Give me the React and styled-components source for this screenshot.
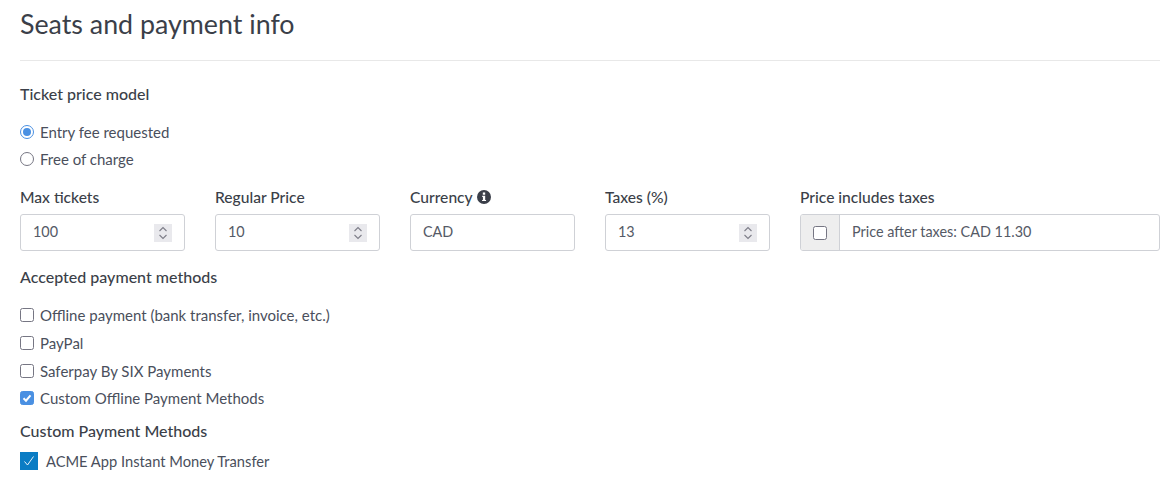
import React from 'react';
import styled, { createGlobalStyle } from 'styled-components';

const GlobalStyle = createGlobalStyle`
  html, body {
    margin: 0;
    background: #fff;
  }
  body {
    font-family: 'Lato', 'Noto Sans', sans-serif;
    font-size: 15px;
    color: #4a4f5c;
  }
`;

const Page = styled.div`
  width: 1174px;
  height: 497px;
  overflow: hidden;
  padding: 0 14px 0 20px;
  box-sizing: border-box;
`;

const Title = styled.h2`
  margin: 0;
  height: 61px;
  padding-top: 6px;
  box-sizing: border-box;
  font-size: 26.8px;
  line-height: 36px;
  font-weight: 400;
  color: #3b3f49;
  border-bottom: 1px solid #e8e8e8;
`;

const SectionLabel = styled.div`
  font-size: 16px;
  font-weight: 500;
  line-height: 20px;
  color: #3b3f49;
  height: 20px;
  margin-top: ${(p) => p.$top || 0}px;
`;

const OptionList = styled.div`
  display: flex;
  flex-direction: column;
  margin-top: ${(p) => p.$top || 0}px;
`;

const Option = styled.label`
  display: flex;
  align-items: center;
  gap: ${(p) => p.$gap || 6}px;
  height: ${(p) => p.$height || 27}px;
  margin-top: ${(p) => p.$top || 0}px;
  font-size: ${(p) => p.$size || 15}px;
  color: #4a4f5c;
`;

const Radio = styled.span`
  width: 14px;
  height: 14px;
  border-radius: 50%;
  box-sizing: border-box;
  border: 1px solid ${(p) => (p.$on ? '#4a90e2' : '#767683')};
  background: #fff;
  display: flex;
  align-items: center;
  justify-content: center;

  &::after {
    content: '';
    display: ${(p) => (p.$on ? 'block' : 'none')};
    width: 8px;
    height: 8px;
    border-radius: 50%;
    background: #4a90e2;
  }
`;

const Check = styled.span`
  width: 14px;
  height: 14px;
  border-radius: 2.5px;
  box-sizing: border-box;
  border: 1px solid ${(p) => (p.$on ? '#4a90e2' : '#767683')};
  background: ${(p) => (p.$on ? '#4a90e2' : '#fff')};
  display: flex;
  align-items: center;
  justify-content: center;
  flex: none;
`;

const BigCheck = styled.span`
  width: 18px;
  height: 18px;
  background: #0a7cc4;
  display: flex;
  align-items: center;
  justify-content: center;
  flex: none;
`;

const FieldRow = styled.div`
  display: flex;
  gap: 30px;
  margin-top: 15px;
`;

const FieldCol = styled.div`
  width: ${(p) => p.$width || 165}px;
`;

const FieldLabel = styled.div`
  height: 20px;
  line-height: 20px;
  margin-bottom: 7px;
  font-size: 15.6px;
  font-weight: 500;
  color: #3b3f49;
  display: flex;
  align-items: center;
  gap: 4px;
`;

const Input = styled.div`
  height: 37px;
  box-sizing: border-box;
  border: 1px solid #cfd1d6;
  border-radius: 3px;
  background: #fff;
  display: flex;
  align-items: center;
  justify-content: space-between;
  padding: 0 12px;
  color: #555a66;
  font-size: 14.4px;
`;

const InputValue = styled.span`
  margin-bottom: 2px;
`;

const Spinner = styled.span`
  width: 18px;
  height: 18px;
  background: #e9e9ed;
  display: flex;
  align-items: center;
  justify-content: center;
`;

const Group = styled.div`
  height: 37px;
  box-sizing: border-box;
  border: 1px solid #cfd1d6;
  border-radius: 3px;
  display: flex;
  overflow: hidden;
`;

const Addon = styled.div`
  width: 38px;
  flex: none;
  background: #eeeeee;
  border-right: 1px solid #cfd1d6;
  display: flex;
  align-items: center;
  justify-content: center;
`;

const GroupText = styled.div`
  flex: 1;
  padding: 0 0 2px 12px;
  display: flex;
  align-items: center;
  color: #555a66;
  font-size: 14.4px;
`;

const SpinIcon = () => (
  <svg width="10" height="14" viewBox="0 0 10 14" fill="none" stroke="#7d7d88" strokeWidth="1.1">
    <path d="M1.5 5 5 1.5 8.5 5" />
    <path d="M1.5 9 5 12.5 8.5 9" />
  </svg>
);

const InfoIcon = () => (
  <svg width="14" height="14" viewBox="0 0 13 13">
    <circle cx="6.5" cy="6.5" r="6.5" fill="#3b3f49" />
    <rect x="5.4" y="2.3" width="2.2" height="2.1" fill="#fff" />
    <path d="M4.8 5.4h2.8v3.9h0.8v1H4.7v-1h0.8V6.4h-0.7z" fill="#fff" />
  </svg>
);

const Tick = () => (
  <svg width="10" height="10" viewBox="0 0 10 10" fill="none" stroke="#fff" strokeWidth="2">
    <path d="M1.5 5.2 4 7.7 8.5 2.3" />
  </svg>
);

const ThinTick = () => (
  <svg width="14" height="14" viewBox="0 0 14 14" fill="none" stroke="#fff" strokeWidth="0.9">
    <path d="M2.5 7.5 5.5 11 11.5 2.500" />
  </svg>
);

const payments = [
  { label: 'Offline payment (bank transfer, invoice, etc.)', height: 28 },
  { label: 'PayPal', height: 28 },
  { label: 'Saferpay By SIX Payments', height: 28 },
  { label: 'Custom Offline Payment Methods', height: 26, on: true },
];

const NumberField = ({ label, value }) => (
  <FieldCol>
    <FieldLabel>{label}</FieldLabel>
    <Input>
      <InputValue>{value}</InputValue>
      <Spinner>
        <SpinIcon />
      </Spinner>
    </Input>
  </FieldCol>
);

const App = () => (
  <Page>
    <GlobalStyle />
    <Title>Seats and payment info</Title>

    <SectionLabel $top={23}>Ticket price model</SectionLabel>
    <OptionList $top={14}>
      <Option>
        <Radio $on />
        Entry fee requested
      </Option>
      <Option>
        <Radio />
        Free of charge
      </Option>
    </OptionList>

    <FieldRow>
      <NumberField label="Max tickets" value="100" />
      <NumberField label="Regular Price" value="10" />
      <FieldCol>
        <FieldLabel>
          Currency
          <InfoIcon />
        </FieldLabel>
        <Input>
          <InputValue>CAD</InputValue>
        </Input>
      </FieldCol>
      <NumberField label="Taxes (%)" value="13" />
      <FieldCol $width={360}>
        <FieldLabel>Price includes taxes</FieldLabel>
        <Group>
          <Addon>
            <Check />
          </Addon>
          <GroupText>Price after taxes: CAD 11.30</GroupText>
        </Group>
      </FieldCol>
    </FieldRow>

    <SectionLabel $top={16}>Accepted payment methods</SectionLabel>
    <OptionList $top={14}>
      {payments.map((item) => (
        <Option key={item.label} $height={item.height}>
          <Check $on={item.on}>{item.on && <Tick />}</Check>
          {item.label}
        </Option>
      ))}
    </OptionList>

    <SectionLabel $top={10}>Custom Payment Methods</SectionLabel>
    <Option $height={30} $gap={8} $top={5} $size={14.7}>
      <BigCheck>
        <ThinTick />
      </BigCheck>
      ACME App Instant Money Transfer
    </Option>
  </Page>
);

export default App;
